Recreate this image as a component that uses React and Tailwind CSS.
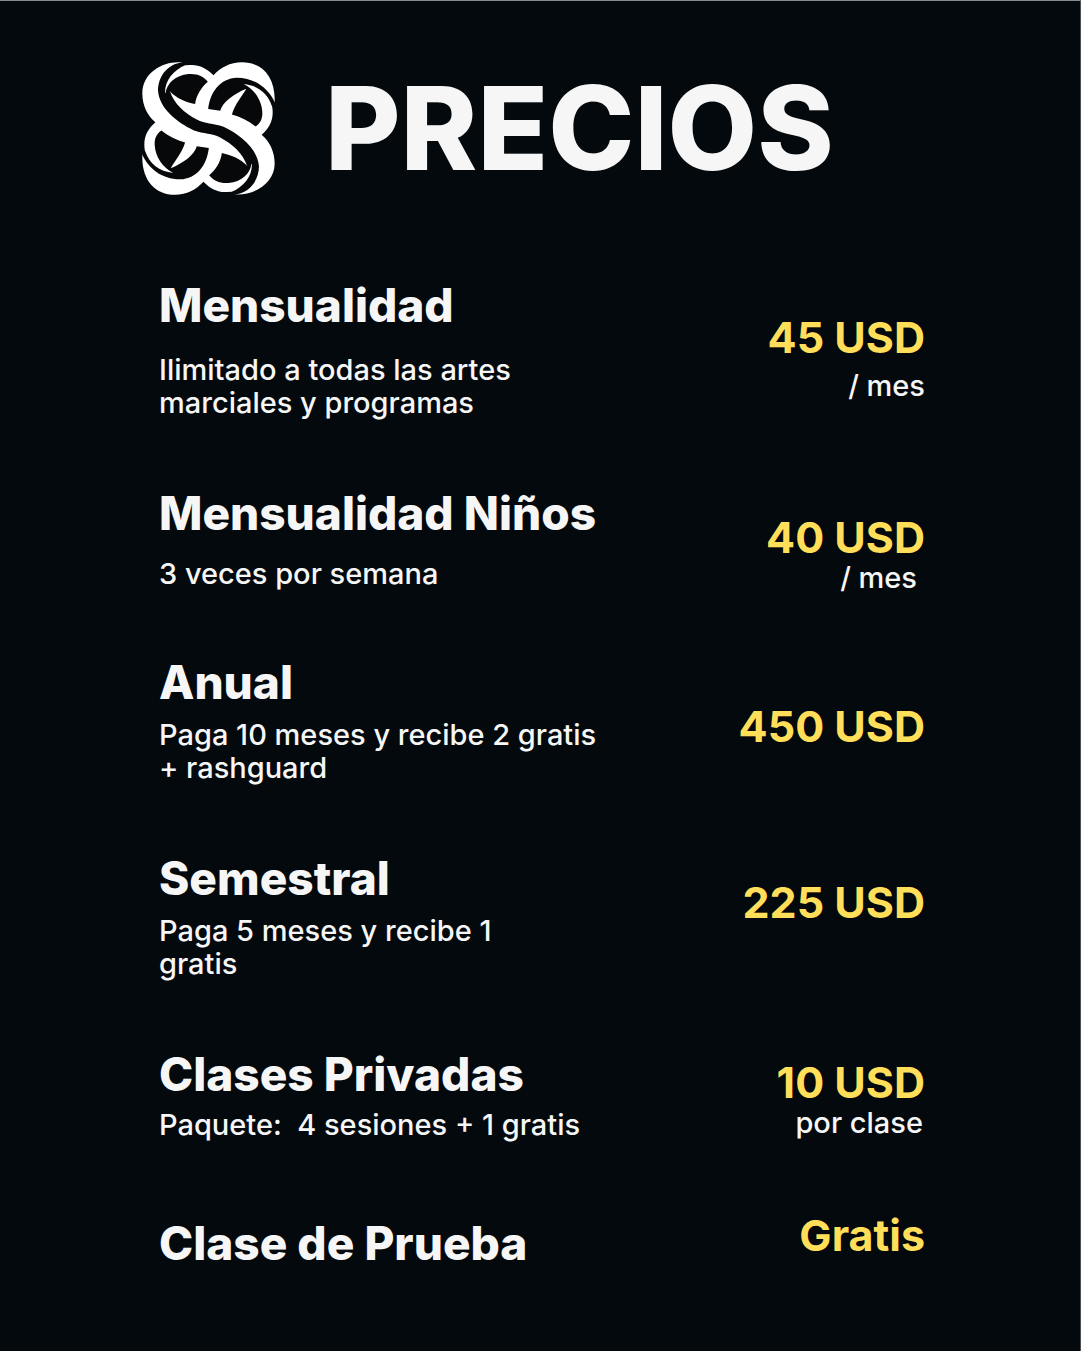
const plans = [
  {
    name: "Mensualidad",
    detail: "Ilimitado a todas las artes marciales y programas",
    price: "45 USD",
    unit: "/ mes",
    row: "",
    detailBox: "mt-5 max-w-[400px]",
    priceBox: "pt-9",
    unitBox: "mt-2",
  },
  {
    name: "Mensualidad Niños",
    detail: "3 veces por semana",
    price: "40 USD",
    unit: "/ mes",
    row: "mt-[66px]",
    detailBox: "mt-4",
    priceBox: "pt-7",
    unitBox: "pr-2",
  },
  {
    name: "Anual",
    detail: "Paga 10 meses y recibe 2 gratis\n+ rashguard",
    price: "450 USD",
    row: "mt-[60px]",
    detailBox: "mt-2",
    priceBox: "pt-12",
  },
  {
    name: "Semestral",
    detail: "Paga 5 meses y recibe 1 gratis",
    price: "225 USD",
    row: "mt-[66px]",
    detailBox: "mt-2 max-w-[350px]",
    priceBox: "pt-7",
  },
  {
    name: "Clases Privadas",
    detail: "Paquete:  4 sesiones + 1 gratis",
    price: "10 USD",
    unit: "por clase",
    row: "mt-[66px]",
    detailBox: "mt-1.5",
    priceBox: "pt-3",
    unitBox: "pr-0.5",
  },
  {
    name: "Clase de Prueba",
    price: "Gratis",
    row: "mt-[66px]",
    nameBox: "pt-2",
    priceBox: "pt-1",
  },
];

const eye = "M107 126 C112 100 135 76 175 72 C200 70 220 78 233 95 C215 110 198 135 195 162 C165 155 140 145 120 124 L110 132 Z";
const loop =
  "M434 158 C415 116 375 83 320 83 C270 85 240 125 234 177 L270 182 C278 155 310 132 348 116 C335 140 315 160 305 193 C330 200 355 212 376 229 C392 218 397 203 396 185 C394 150 372 118 340 102 C383 106 412 130 424 166 L442 172 Z";

function Logo() {
  return (
    <svg viewBox="36 36 398 398" className="size-[133px] shrink-0" role="img" aria-label="Logo">
      <path
        fill="#ffffff"
        d="M158 38 C110 30 37 62 37 130 C37 168 54 198 76 216 C55 235 43 255 43 282 C43 292 44 300 46 306 L37 312 C34 390 75 433 135 433 C170 433 197 418 220 394 C240 415 265 427 290 425 L303 424 L312 432 C370 437 433 400 433 340 C433 302 416 272 394 254 C415 235 427 215 427 188 C427 178 426 170 424 164 L433 158 C436 80 395 37 335 37 C300 37 270 53 250 76 C230 55 205 43 180 45 L167 46 Z"
      />
      <g fill="#070809">
        <path d="M158 37 C110 42 84 82 84 122 C88 175 140 216 190 240 C222 252 245 248 270 262 C308 282 338 310 350 346 L365 342 C365 380 340 410 303 425 L298 442 L312 433 C360 428 386 388 386 348 C382 295 330 254 280 230 C248 218 225 222 200 208 C162 188 132 160 120 124 L105 128 C105 90 130 60 167 45 L172 28 Z" />
        <path d={eye} />
        <path d={loop} />
        <g transform="rotate(180 235 235)">
          <path d={eye} />
          <path d={loop} />
        </g>
      </g>
    </svg>
  );
}

function Plan({ plan }) {
  return (
    <li className={`flex items-start justify-between ${plan.row}`}>
      <div className={plan.nameBox}>
        <h2 className="text-[46px] leading-14 font-extrabold">{plan.name}</h2>
        {plan.detail && (
          <p className={`text-[29px] leading-[33px] font-medium whitespace-pre-wrap ${plan.detailBox}`}>{plan.detail}</p>
        )}
      </div>
      <div className={`shrink-0 text-right ${plan.priceBox}`}>
        <p className="text-[43px] leading-12 font-bold text-[#ffde59]">{plan.price}</p>
        {plan.unit && <p className={`text-[29px] leading-[33px] font-medium ${plan.unitBox}`}>{plan.unit}</p>}
      </div>
    </li>
  );
}

export default function App() {
  return (
    <main className="min-h-screen border-t border-r border-t-[#858a8c] border-r-[#4a4f52] bg-[#03090c] pb-20 font-['Inter',sans-serif] text-[#f6f6f6]">
      <header className="flex items-center gap-[50px] pt-[61px] pl-[142px]">
        <Logo />
        <h1 className="text-[116px] leading-[131px] font-extrabold">PRECIOS</h1>
      </header>
      <ul className="mt-[82px] pr-[155px] pl-[159px]">
        {plans.map((plan) => (
          <Plan key={plan.name} plan={plan} />
        ))}
      </ul>
    </main>
  );
}
